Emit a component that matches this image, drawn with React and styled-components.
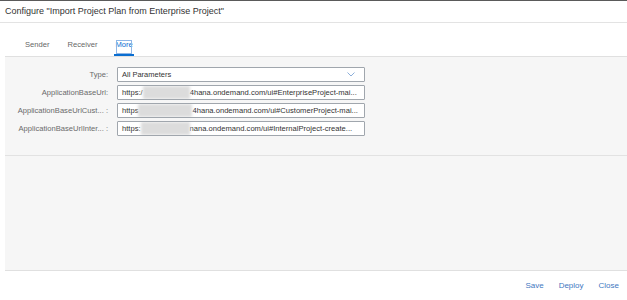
import React from "react";
import styled, { createGlobalStyle } from "styled-components";

const Global = createGlobalStyle`
  html, body { margin: 0; padding: 0; background: #fff; }
  body { font-family: "Liberation Sans", Arial, sans-serif; }
`;

const rows = [
  { label: "ApplicationBaseUrl:", pre: "https:/", blur: 47, post: "4hana.ondemand.com/ui#EnterpriseProject-mai..." },
  { label: "ApplicationBaseUrlCust... :", pre: "https", blur: 54, post: "4hana.ondemand.com/ui#CustomerProject-mai..." },
  { label: "ApplicationBaseUrlInter... :", pre: "https:", blur: 49, post: "nana.ondemand.com/ui#InternalProject-create..." },
];

const App = () => {
  return (
    <Page>
      <Global />
      <Header>Configure "Import Project Plan from Enterprise Project"</Header>
      <Body>
        <TabBar>
          <Tab>Sender</Tab>
          <Tab>Receiver</Tab>
          <Tab active>More</Tab>
        </TabBar>
        <Panel>
          <FormSection>
            <Form>
              <Label>Type:</Label>
              <Field>
                <span>All Parameters</span>
                <svg width="8" height="5" viewBox="0 0 8 5">
                  <path d="M0.5 0.5l3.5 3.5L7.5 0.5" fill="none" stroke="#7fa6d6" strokeWidth="0.9" />
                </svg>
              </Field>
              {rows.map((r) => (
                <React.Fragment key={r.label}>
                  <Label>{r.label}</Label>
                  <Field>
                    <Url>
                      {r.pre}
                      <Blur w={r.blur} />
                      {r.post}
                    </Url>
                  </Field>
                </React.Fragment>
              ))}
            </Form>
          </FormSection>
        </Panel>
        <Footer>
          <Action>Save</Action>
          <Action>Deploy</Action>
          <Action>Close</Action>
        </Footer>
      </Body>
    </Page>
  );
};

const Page = styled.div`
  width: 627px;
  height: 300px;
  display: flex;
  flex-direction: column;
  border-top: 1px solid #5a5a5a;
  box-sizing: border-box;
  overflow: hidden;
`;

const Header = styled.div`
  height: 21px;
  line-height: 21px;
  padding-left: 5px;
  font-size: 9px;
  color: #333;
  border-bottom: 1px solid #e3e3e3;
`;

const Body = styled.div`
  margin-left: 5px;
  display: flex;
  flex-direction: column;
  flex: 1;
`;

const TabBar = styled.div`
  height: 33px;
  display: flex;
  align-items: flex-end;
  gap: 16px;
  padding-left: 19px;
  border-bottom: 1px solid #e0e0e0;
`;

const Tab = styled.div`
  font-size: 7.6px;
  color: ${(p) => (p.active ? "#0a6ed1" : "#666")};
  padding: 2px 1px 4px;
  line-height: 10px;
  border-bottom: 2px solid ${(p) => (p.active ? "#0a6ed1" : "transparent")};
  outline: ${(p) => (p.active ? "1px solid #8fb6e6" : "none")};
  outline-offset: -3px;
`;

const Panel = styled.div`
  height: 213px;
  background: #f6f6f6;
  border-bottom: 1px solid #e0e0e0;
`;

const FormSection = styled.div`
  height: 88px;
  padding-top: 10px;
  border-bottom: 1px solid #e2e2e2;
`;

const Form = styled.div`
  display: grid;
  grid-template-columns: 103px 248px;
  column-gap: 9px;
  row-gap: 3px;
`;

const Label = styled.div`
  font-size: 7.6px;
  color: #6a6a6a;
  text-align: right;
  line-height: 15px;
  white-space: nowrap;
`;

const Field = styled.div`
  height: 15px;
  box-sizing: border-box;
  background: #fff;
  border: 1px solid #a0a6ad;
  border-radius: 1px;
  display: flex;
  align-items: center;
  justify-content: space-between;
  padding: 0 9px 0 4px;
  font-size: 7.5px;
  color: #333;
  overflow: hidden;
  white-space: nowrap;
`;

const Url = styled.span`
  display: flex;
  align-items: center;
  font-size: 7.6px;
`;

const Blur = styled.span`
  display: inline-block;
  width: ${(p) => p.w}px;
  height: 13px;
  background: #dcdcdc;
  filter: blur(1.5px);
`;

const Footer = styled.div`
  flex: 1;
  display: flex;
  justify-content: flex-end;
  align-items: center;
  gap: 15px;
  padding-right: 8px;
`;

const Action = styled.div`
  font-size: 8px;
  color: #3f78bf;
`;

export default App;
